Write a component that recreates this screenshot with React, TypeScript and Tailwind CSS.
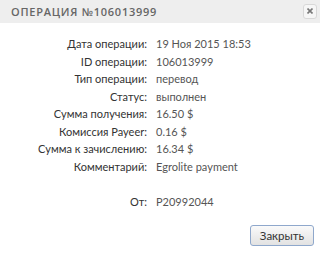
import React from "react";

const rows: [string, string][] = [
  ["Дата операции:", "19 Ноя 2015 18:53"],
  ["ID операции:", "106013999"],
  ["Тип операции:", "перевод"],
  ["Статус:", "выполнен"],
  ["Сумма получения:", "16.50 $"],
  ["Комиссия Payeer:", "0.16 $"],
  ["Сумма к зачислению:", "16.34 $"],
  ["Комментарий:", "Egrolite payment"],
  ["", ""],
  ["От:", "P20992044"],
];

export default function App() {
  return (
    <div className="w-[320px] h-[254px] bg-white flex flex-col font-['Lato',sans-serif]">
      <div className="h-[23px] bg-[#eeeeee] flex items-center justify-between pl-[11px] pr-[3px]">
        <span className="font-['Open_Sans',sans-serif] text-[11px] tracking-[0.75px] text-[#666666] font-semibold leading-none">
          ОПЕРАЦИЯ №106013999
        </span>
        <div className="w-[14px] h-[15px] border border-[#d8d8d8] rounded-[3px] bg-[#f6f6f6] flex items-center justify-center mt-[-1px]">
          <svg width="6" height="6" viewBox="0 0 6 6">
            <path d="M0.5 0.5L5.5 5.5M5.5 0.5L0.5 5.5" stroke="#777" strokeWidth="1.6" />
          </svg>
        </div>
      </div>
      <div className="flex flex-col pt-[12px]">
        {rows.map(([l, v], i) => (
          <div key={i} className="flex h-[17.5px] items-center text-[11px] leading-none">
            <div className="w-[147px] text-right text-[#333333] whitespace-nowrap">{l}</div>
            <div className="pl-[9px] text-[#555555] whitespace-nowrap">{v}</div>
          </div>
        ))}
      </div>
      <div className="flex justify-end pr-[6px] mt-[15px]">
        <button className="w-[64px] h-[21px] rounded-[3px] border border-[#8fa8cc] bg-gradient-to-b from-[#fafafa] to-[#e2e2e2] text-[11.5px] text-[#333333] leading-none">
          Закрыть
        </button>
      </div>
    </div>
  );
}
